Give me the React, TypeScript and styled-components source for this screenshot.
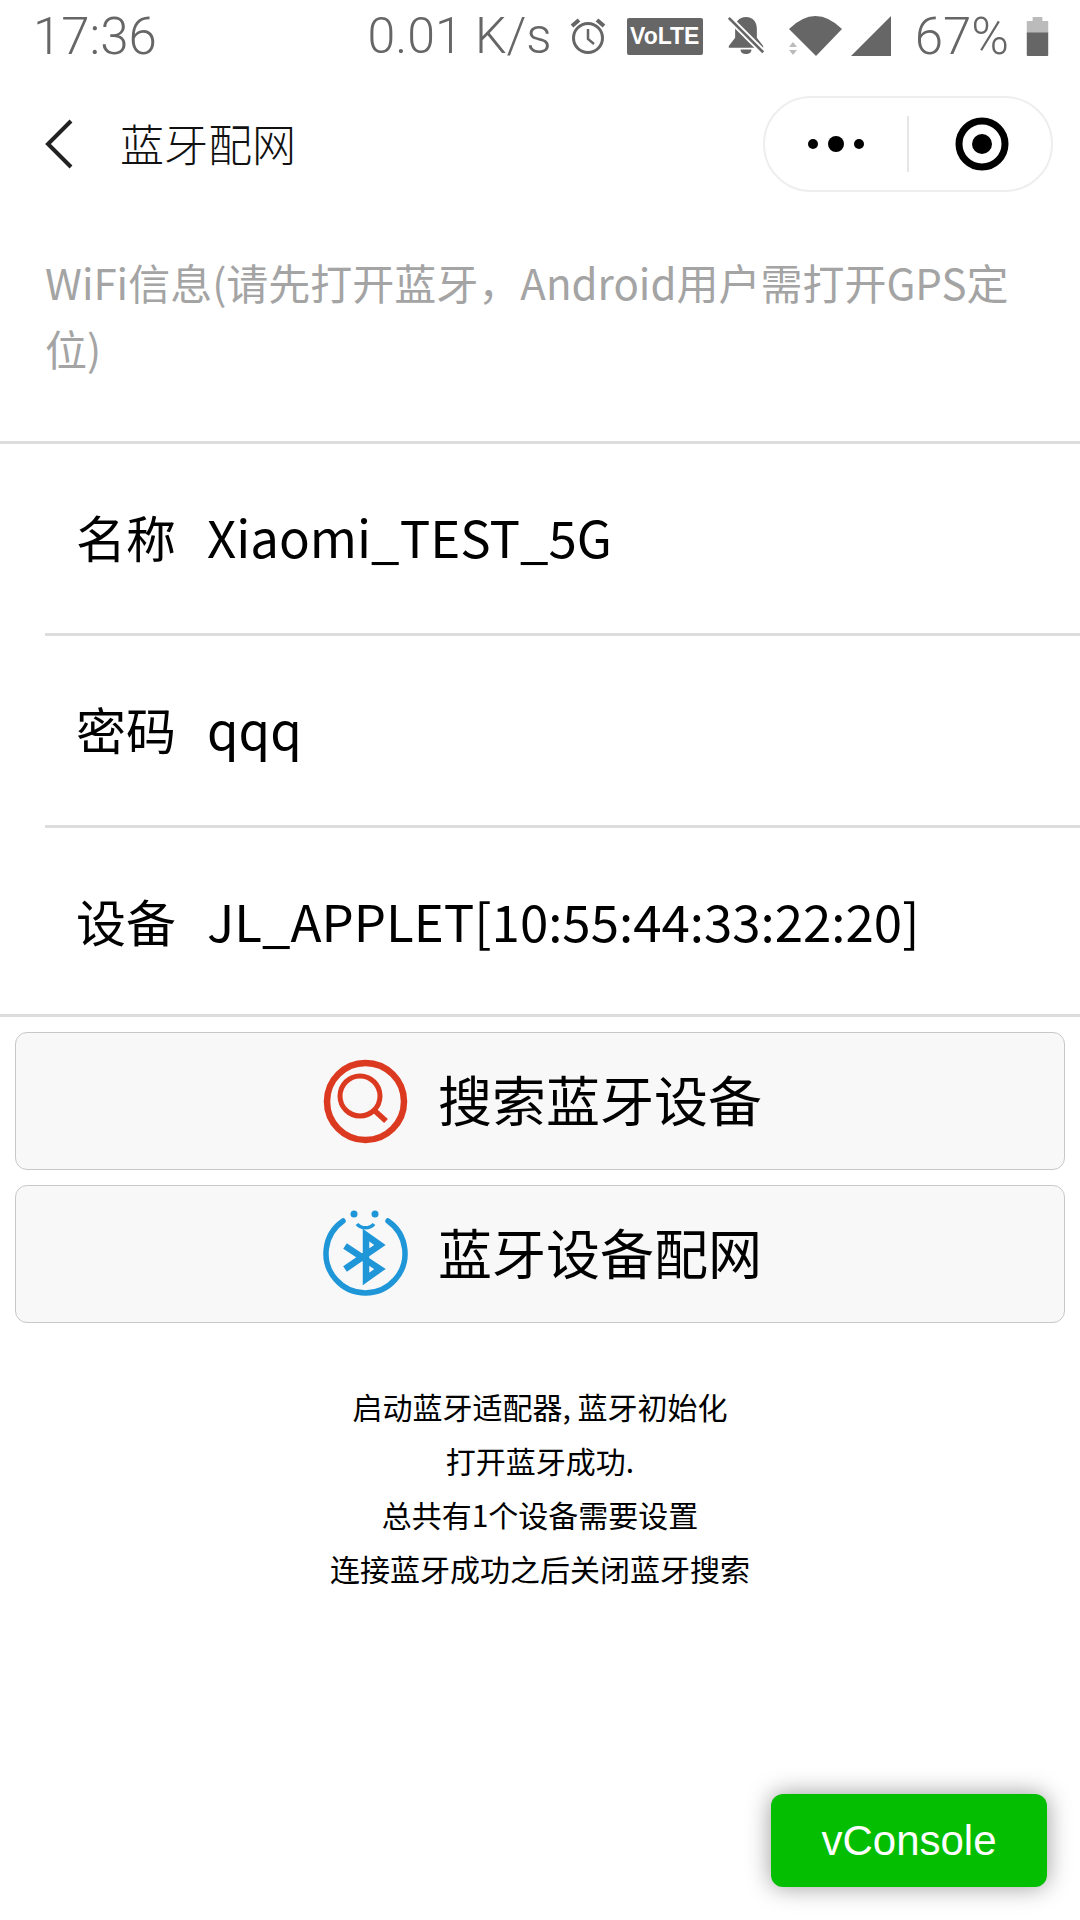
import styled, { createGlobalStyle } from 'styled-components'

const GlobalStyle = createGlobalStyle`
  html, body {
    margin: 0;
    padding: 0;
    background: #fff;
  }
  * {
    box-sizing: border-box;
  }
`

const Page = styled.div`
  position: relative;
  width: 1080px;
  height: 1920px;
  overflow: hidden;
  background: #fff;
  font-family: "Noto Sans CJK SC", "Noto Sans", sans-serif;
  color: #000;
`

const StatusBar = styled.div`
  height: 72px;
  padding: 0 31px 0 33px;
  display: flex;
  align-items: center;
  color: #666;
  font-family: Roboto, sans-serif;
  font-weight: 300;
  font-size: 51px;
`

const StatusTime = styled.span`
  flex: 1;
`

const StatusItems = styled.div`
  display: flex;
  align-items: center;
`

const StatusText = styled.span<{ $mr: number; $size: number }>`
  margin-right: ${(p) => p.$mr}px;
  font-size: ${(p) => p.$size}px;
`

const StatusIcon = styled.svg<{ $mr: number }>`
  display: block;
  margin-right: ${(p) => p.$mr}px;
`

const VolteBadge = styled.span`
  width: 76px;
  height: 37px;
  margin-right: 24px;
  border-radius: 2px;
  background: #666;
  color: #fff;
  font-family: "Liberation Sans", sans-serif;
  font-weight: 700;
  font-size: 23px;
  line-height: 37px;
  text-align: center;
`

const NavBar = styled.div`
  height: 120px;
  margin-top: 12px;
  padding: 0 27px 0 45px;
  display: flex;
  align-items: center;
`

const BackIcon = styled.svg`
  display: block;
  margin-right: 47px;
`

const NavTitle = styled.div`
  flex: 1;
  padding-bottom: 3px;
  font-size: 44px;
  font-weight: 300;
  line-height: 60px;
  color: #111;
`

const Capsule = styled.div`
  width: 290px;
  height: 96px;
  border: 2px solid #eee;
  border-radius: 48px;
  display: flex;
  align-items: center;
`

const CapsuleSide = styled.div`
  flex: 1;
  display: flex;
  justify-content: center;
`

const CapsuleDivider = styled.div`
  width: 2px;
  height: 56px;
  background: #e6e6e6;
`

const TargetIcon = styled.svg`
  display: block;
  margin-left: 4px;
`

const Tip = styled.div`
  padding: 45px 45px 60px;
  font-size: 42px;
  line-height: 66px;
  color: #a4a4a4;
  border-bottom: 3px solid #ddd;
`

const Fields = styled.div`
  border-bottom: 3px solid #ddd;
`

const Field = styled.div`
  margin-left: 45px;
  height: 192px;
  padding: 0 0 6px 31px;
  display: flex;
  align-items: center;
  border-bottom: 3px solid #ddd;

  &:last-child {
    border-bottom: none;
    height: 186px;
    padding-bottom: 2px;
  }
`

const FieldLabel = styled.span`
  width: 131px;
  font-size: 50px;
`

const FieldValue = styled.span`
  font-size: 51px;
`

const Actions = styled.div`
  margin-top: 15px;
  padding: 0 15px;
  display: flex;
  flex-direction: column;
  gap: 15px;
`

const ActionButton = styled.div`
  height: 138px;
  padding-left: 307px;
  display: flex;
  align-items: center;
  gap: 30px;
  background: #f8f8f8;
  border: 1px solid #c8c8c8;
  border-radius: 12px;
  font-size: 54px;
`

const ActionLabel = styled.span`
  padding-bottom: 6px;
`

const Log = styled.div`
  margin-top: 56px;
  text-align: center;
  font-size: 30px;
  line-height: 54px;
`

const VConsole = styled.div`
  position: absolute;
  left: 771px;
  top: 1794px;
  width: 276px;
  height: 93px;
  border-radius: 12px;
  background: #04be02;
  box-shadow: 0 0 24px rgba(0, 0, 0, 0.4);
  color: #fff;
  font-family: "Liberation Sans", sans-serif;
  font-size: 42px;
  line-height: 93px;
  text-align: center;
`

const AlarmIcon = () => (
  <StatusIcon $mr={21} width="36" height="38" viewBox="0 0 36 38" fill="none" stroke="#666">
    <circle cx="18" cy="21" r="14.5" strokeWidth="3" />
    <path d="M18 12v10l6 5" strokeWidth="2.5" />
    <path d="M2 9l7-6M34 9l-7-6" strokeWidth="4" />
  </StatusIcon>
)

const MuteIcon = () => (
  <StatusIcon $mr={24} width="38" height="40" viewBox="0 0 42 42">
    <path d="M21 0c8 0 12 6 12 13v10l7 9v2H2v-2l7-9V13C9 6 13 0 21 0z" fill="#666" />
    <path d="M15 36h12c0 4-3 5-6 5s-6-1-6-5z" fill="#666" />
    <path d="M2 1l38 38" stroke="#fff" strokeWidth="7" />
    <path d="M2 1l38 38" stroke="#666" strokeWidth="3" />
  </StatusIcon>
)

const WifiIcon = () => (
  <StatusIcon $mr={9} width="53" height="40" viewBox="0 0 53 40">
    <path d="M0 13Q26.5 -13 53 13L27 40z" fill="#666" />
    <path d="M0 31l4-5 4 5zM0 34l4 5 4-5z" fill="#bbb" />
  </StatusIcon>
)

const SignalIcon = () => (
  <StatusIcon $mr={24} width="40" height="40" viewBox="0 0 40 40">
    <path d="M40 0v40H0z" fill="#666" />
  </StatusIcon>
)

const BatteryIcon = () => (
  <StatusIcon $mr={0} width="23" height="39" viewBox="0 0 22 40">
    <path d="M6 0h10v4h6v13H0V4h6z" fill="#bbb" />
    <path d="M0 16h22v23a1 1 0 0 1-1 1H1a1 1 0 0 1-1-1z" fill="#666" />
  </StatusIcon>
)

const SearchBadge = () => (
  <svg width="85" height="85" viewBox="0 0 85 85" fill="none" stroke="#dc3a20">
    <circle cx="42.5" cy="42.5" r="38.5" strokeWidth="6.5" />
    <circle cx="37" cy="37" r="20" strokeWidth="5" />
    <path d="M52 52l11 10" strokeWidth="5.5" />
  </svg>
)

const BluetoothBadge = () => (
  <svg width="85" height="88" viewBox="0 0 85 88" fill="none" stroke="#1f96d8">
    <path d="M20 11A39.5 39.5 0 1 0 65 11" strokeWidth="5.5" strokeLinecap="round" />
    <circle cx="31" cy="4" r="3.5" fill="#1f96d8" stroke="none" />
    <circle cx="52" cy="4" r="3.5" fill="#1f96d8" stroke="none" />
    <path d="M34 14c4 5 13 5 17 0" strokeWidth="3.5" />
    <path d="M22 36l35 23-14 10V25l14 10-35 24" strokeWidth="6.5" />
  </svg>
)

export default function App() {
  return (
    <Page>
      <GlobalStyle />
      <StatusBar>
        <StatusTime>17:36</StatusTime>
        <StatusItems>
          <StatusText $mr={18} $size={50}>0.01 K/s</StatusText>
          <AlarmIcon />
          <VolteBadge>VoLTE</VolteBadge>
          <MuteIcon />
          <WifiIcon />
          <SignalIcon />
          <StatusText $mr={17} $size={51}>67%</StatusText>
          <BatteryIcon />
        </StatusItems>
      </StatusBar>
      <NavBar>
        <BackIcon width="28" height="50" viewBox="0 0 28 50" fill="none" stroke="#222" strokeWidth="4">
          <path d="M26 2L3 25l23 23" />
        </BackIcon>
        <NavTitle>蓝牙配网</NavTitle>
        <Capsule>
          <CapsuleSide>
            <svg width="58" height="20" viewBox="0 0 58 20" fill="#000">
              <circle cx="6" cy="10" r="5" />
              <circle cx="29" cy="10" r="8" />
              <circle cx="52" cy="10" r="5" />
            </svg>
          </CapsuleSide>
          <CapsuleDivider />
          <CapsuleSide>
            <TargetIcon width="54" height="54" viewBox="0 0 54 54">
              <circle cx="27" cy="27" r="23" fill="none" stroke="#000" strokeWidth="7" />
              <circle cx="27" cy="27" r="10" fill="#000" />
            </TargetIcon>
          </CapsuleSide>
        </Capsule>
      </NavBar>
      <Tip>WiFi信息(请先打开蓝牙，Android用户需打开GPS定位)</Tip>
      <Fields>
        <Field>
          <FieldLabel>名称</FieldLabel>
          <FieldValue>Xiaomi_TEST_5G</FieldValue>
        </Field>
        <Field>
          <FieldLabel>密码</FieldLabel>
          <FieldValue>qqq</FieldValue>
        </Field>
        <Field>
          <FieldLabel>设备</FieldLabel>
          <FieldValue>JL_APPLET[10:55:44:33:22:20]</FieldValue>
        </Field>
      </Fields>
      <Actions>
        <ActionButton>
          <SearchBadge />
          <ActionLabel>搜索蓝牙设备</ActionLabel>
        </ActionButton>
        <ActionButton>
          <BluetoothBadge />
          <ActionLabel>蓝牙设备配网</ActionLabel>
        </ActionButton>
      </Actions>
      <Log>
        <div>启动蓝牙适配器, 蓝牙初始化</div>
        <div>打开蓝牙成功.</div>
        <div>总共有1个设备需要设置</div>
        <div>连接蓝牙成功之后关闭蓝牙搜索</div>
      </Log>
      <VConsole>vConsole</VConsole>
    </Page>
  )
}
